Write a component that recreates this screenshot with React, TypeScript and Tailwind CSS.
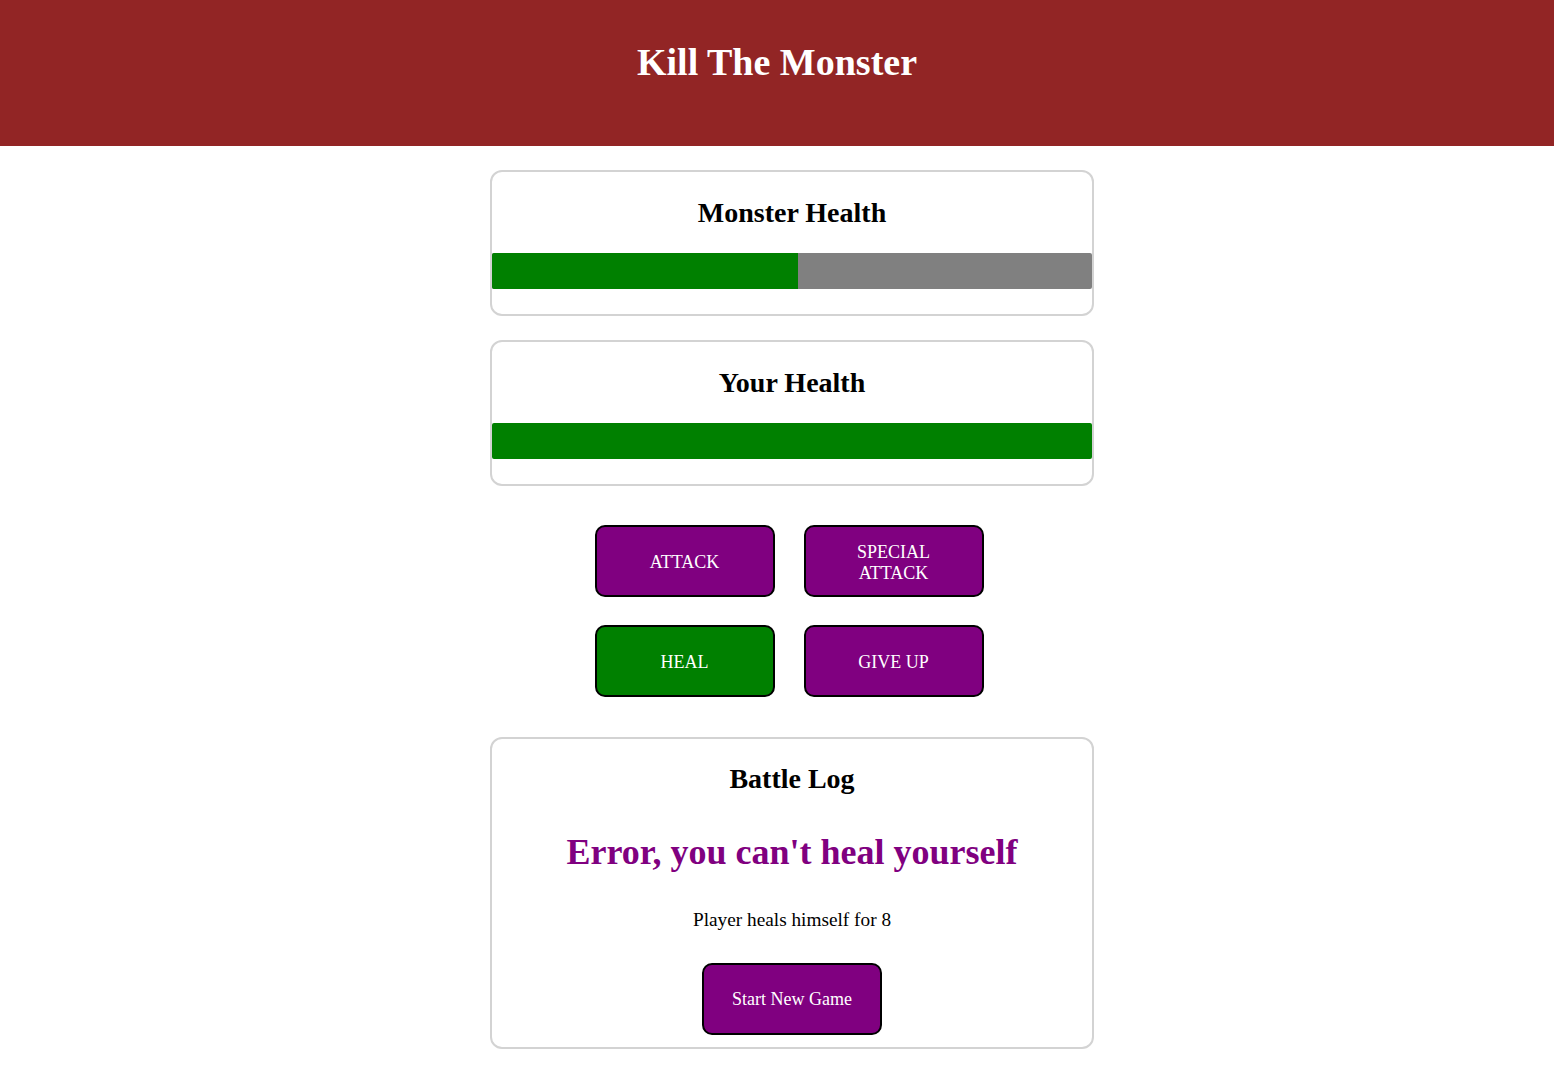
const Card = ({ title, children }: { title: string; children: React.ReactNode }) => (
  <section className="w-[604px] mx-auto border-2 border-[#d3d3d3] rounded-xl text-center pt-[25px] pb-[25px]">
    <h2 className="text-[28px] leading-[32px] font-bold mb-[24px]">{title}</h2>
    {children}
  </section>
);

const HealthBar = ({ value }: { value: number }) => (
  <div className="h-[36px] bg-[#808080] rounded-[2px] overflow-hidden">
    <div className="h-full bg-[#008000]" style={{ width: `${value}%` }} />
  </div>
);

const Btn = ({ label, green }: { label: string; green?: boolean }) => (
  <button
    className={`w-[180px] h-[72px] border-2 border-black rounded-[10px] text-white text-[18px] leading-[21px] px-[36px] pt-[3px] ${
      green ? "bg-[#008000]" : "bg-[#800080]"
    }`}
  >
    {label}
  </button>
);

export default function App() {
  return (
    <div className="min-h-screen bg-white text-black" style={{ fontFamily: '"Liberation Serif", "Times New Roman", serif' }}>
      <header className="h-[146px] bg-[#922525] text-white text-center pt-[40px]">
        <h1 className="text-[38px] leading-[44px] font-bold">Kill The Monster</h1>
      </header>

      <main className="pt-[24px] pb-[30px] pl-[30px]">
        <Card title="Monster Health">
          <HealthBar value={51} />
        </Card>
        <div className="h-[24px]" />
        <Card title="Your Health">
          <HealthBar value={100} />
        </Card>

        <div className="grid grid-cols-[180px_180px] gap-x-[29px] gap-y-[28px] justify-center mt-[39px] mb-[40px] -translate-x-[3px]">
          <Btn label="ATTACK" />
          <Btn label="SPECIAL ATTACK" />
          <Btn label="HEAL" green />
          <Btn label="GIVE UP" />
        </div>

        <section className="w-[604px] mx-auto border-2 border-[#d3d3d3] rounded-xl text-center pt-[24px] pb-[12px]">
          <h2 className="text-[28px] leading-[32px] font-bold">Battle Log</h2>
          <p className="text-[36px] leading-[42px] font-bold text-[#800080] mt-[36px]">Error, you can't heal yourself</p>
          <p className="text-[19.3px] leading-[22px] mt-[36px]">Player heals himself for 8</p>
          <div className="mt-[32px] flex justify-center">
            <button className="w-[180px] h-[72px] border-2 border-black rounded-[10px] bg-[#800080] text-white text-[18px]">
              Start New Game
            </button>
          </div>
        </section>
      </main>
    </div>
  );
}
